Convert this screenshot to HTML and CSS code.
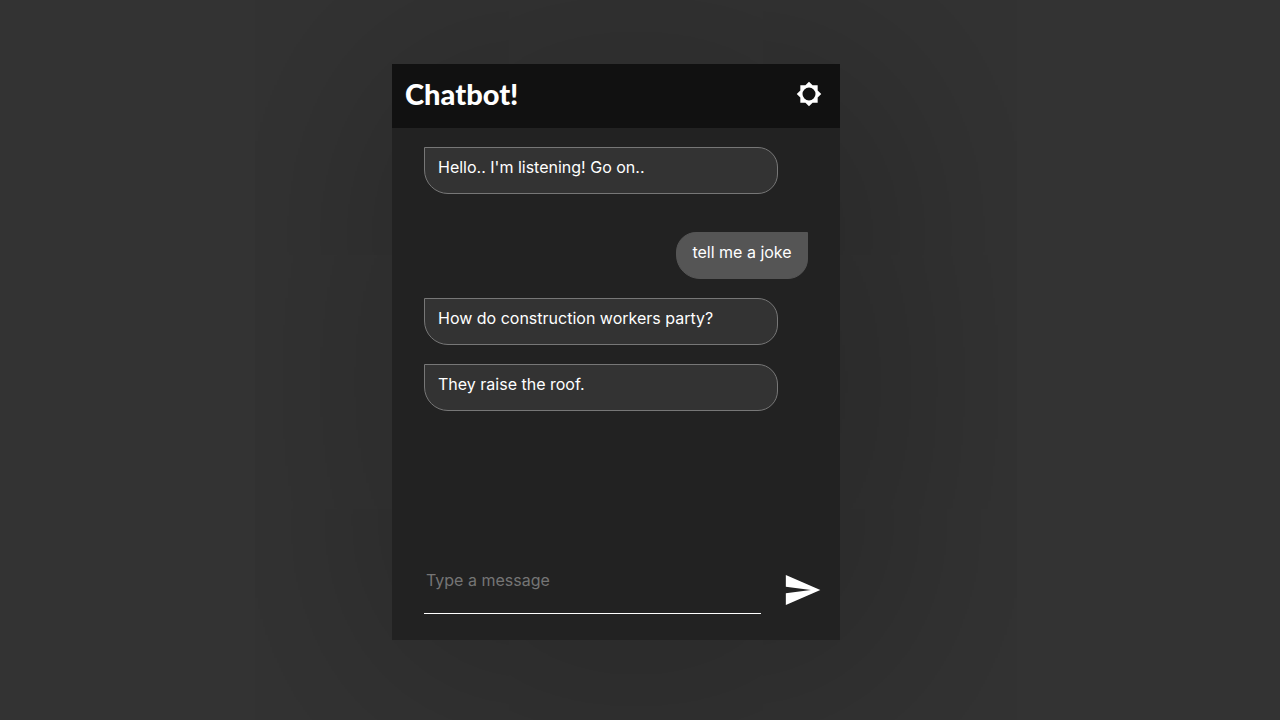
FILE: index.html
```html
<!DOCTYPE html>
<html lang="en">
<head>
<meta charset="utf-8">
<title>Chatbot!</title>
<meta name="viewport" content="width=device-width, initial-scale=1">
<link rel="stylesheet" href="styles.css">
</head>
<body>
<main class="chat">
  <header class="chat-header">
    <h1 class="chat-title">Chatbot!</h1>
    <button class="icon-button" type="button" aria-label="Toggle theme">
      <svg class="icon-theme" viewBox="0 0 24 24" aria-hidden="true"><path fill="currentColor" fill-rule="evenodd" d="M20 15.31 23.31 12 20 8.69V4h-4.69L12 .69 8.69 4H4v4.69L.69 12 4 15.31V20h4.69L12 23.31 15.31 20H20ZM12 18a6 6 0 1 1 0-12 6 6 0 0 1 0 12Z"/></svg>
    </button>
  </header>
  <section class="messages" aria-label="Messages">
    <p class="message bot">Hello.. I'm listening! Go on..</p>
    <p class="message user">tell me a joke</p>
    <p class="message bot">How do construction workers party?</p>
    <p class="message bot">They raise the roof.</p>
  </section>
  <form class="composer">
    <input class="composer-input" type="text" placeholder="Type a message" aria-label="Message">
    <button class="icon-button" type="button" aria-label="Send">
      <svg class="icon-send" viewBox="0 0 24 24" aria-hidden="true"><path fill="currentColor" d="M2.3 21 23 12 2.3 3v7l15 2-15 2Z"/></svg>
    </button>
  </form>
</main>
</body>
</html>
```
FILE: styles.css
```css
* {
  box-sizing: border-box;
}

body {
  margin: 0;
  min-height: 100vh;
  padding: 64px 48px 80px 0;
  display: flex;
  justify-content: center;
  background: #333;
  color: #fff;
  font-family: Inter, "Liberation Sans", sans-serif;
  font-size: 16px;
  line-height: 20px;
}

.chat {
  width: 35vw;
  min-width: 320px;
  min-height: 80vh;
  display: flex;
  flex-direction: column;
  background: #222;
  box-shadow: 20px 20px 250px rgba(0, 0, 0, 0.35);
}

.chat-header {
  display: flex;
  align-items: center;
  justify-content: space-between;
  padding: 10px 18px 14px 13px;
  background: #111;
}

.chat-title {
  margin: 0;
  font-family: Lato, sans-serif;
  font-size: 29px;
  font-weight: 900;
  line-height: 40px;
}

.icon-button {
  display: flex;
  padding: 0;
  border: 0;
  background: none;
  color: #fff;
  cursor: pointer;
}

.icon-theme {
  width: 26px;
  height: 26px;
}

.icon-send {
  width: 40px;
  height: 40px;
}

.messages {
  flex: 1;
  display: flex;
  flex-direction: column;
  gap: 19px;
  padding: 19px 32px;
}

.message {
  margin: 0;
  padding: 9px 13px 16px;
  border: 1px solid #777;
}

.bot {
  width: 92.2%;
  border-radius: 0 20px 20px 24px;
  background: #333;
}

.user {
  align-self: flex-end;
  min-width: 132px;
  margin-top: 19px;
  border-color: #555;
  border-radius: 20px 0 20px 24px;
  background: #555;
  text-align: center;
}

.composer {
  display: flex;
  align-items: center;
  gap: 21px;
  padding: 0 18px 26px 32px;
}

.composer-input {
  flex: 1;
  min-width: 0;
  height: 48px;
  padding: 0 2px 20px;
  border: 0;
  border-bottom: 1px solid #fff;
  outline: 0;
  background: transparent;
  color: #fff;
  font: inherit;
}

.composer-input::placeholder {
  color: #757575;
}
```
